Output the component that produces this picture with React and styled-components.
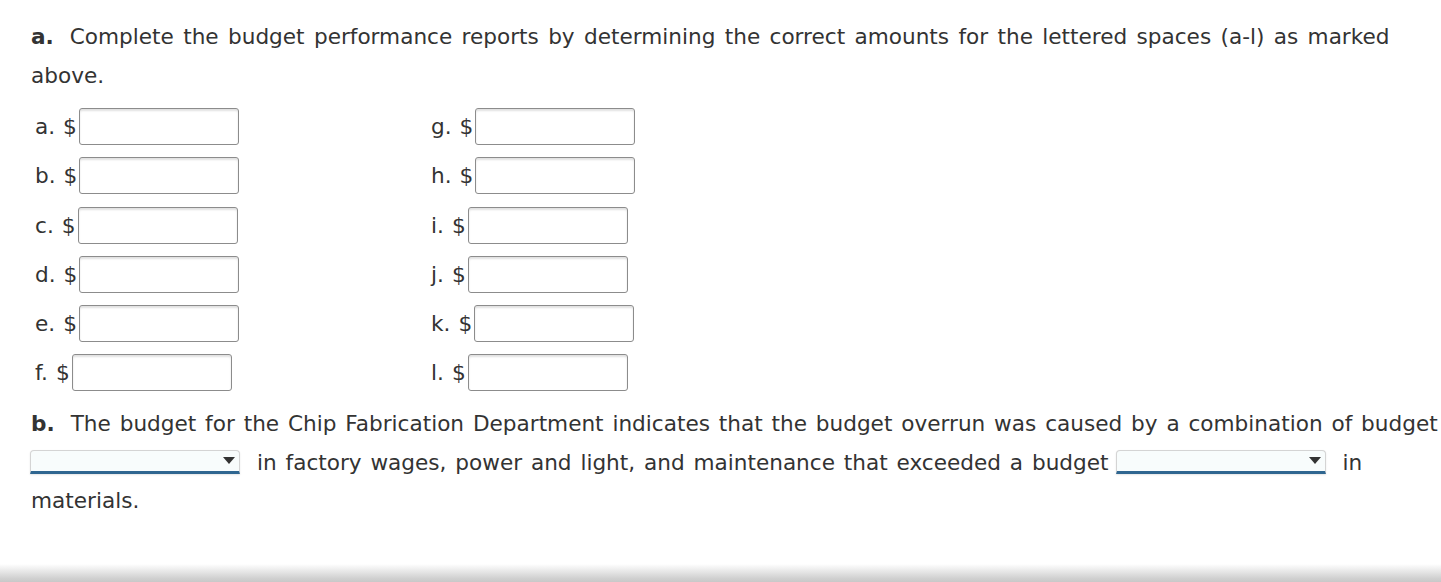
import React from "react";
import styled, { createGlobalStyle } from "styled-components";

const GlobalStyle = createGlobalStyle`
  html, body {
    margin: 0;
    padding: 0;
    background: #fff;
  }
  body {
    font-family: "DejaVu Sans", Verdana, sans-serif;
    color: #333;
  }
`;

const Page = styled.div`
  width: 1441px;
  height: 582px;
  display: flex;
  flex-direction: column;
  overflow: hidden;
`;

const Content = styled.div`
  flex: 1;
  padding: 18px 0 0 31px;
`;

const Para = styled.p`
  margin: 0;
  font-size: 21.6px;
  line-height: 38.6px;
  word-spacing: ${(p) => p.$ws}px;
`;

const Tag = styled.b`
  font-weight: bold;
  margin-right: 16px;
`;

const Grid = styled.div`
  display: grid;
  grid-template-columns: 396px auto;
  grid-auto-flow: column;
  grid-template-rows: repeat(6, 37px);
  row-gap: 12.2px;
  margin: 13px 0 14px 4px;
`;

const Row = styled.label`
  display: flex;
  align-items: center;
  font-size: 21.6px;
  color: #333;
`;

const Letter = styled.span`
  margin-right: 8px;
`;

const Amount = styled.input`
  width: 160px;
  height: 37px;
  box-sizing: border-box;
  border: 1px solid #8c8c8c;
  border-radius: 3px;
  box-shadow: inset 0 2px 2px rgba(0, 0, 0, 0.12);
  background: #fff;
  margin: 0 0 0 2px;
  outline: none;
`;

const SelectBox = styled.span`
  display: inline-block;
  position: relative;
  vertical-align: middle;
  width: ${(p) => p.$w}px;
  height: 24px;
  box-sizing: border-box;
  border: 1px solid #d4d4d4;
  border-bottom: 3px solid #2f6690;
  border-radius: 4px 4px 0 0;
  background: #f8fcfc;
  margin: -4px ${(p) => p.$mr}px 0 ${(p) => p.$ml}px;
  box-shadow: 0 1px 2px rgba(0, 0, 0, 0.1);
`;

const Caret = styled.span`
  position: absolute;
  right: 4px;
  top: 6px;
  width: 0;
  height: 0;
  border-left: 6px solid transparent;
  border-right: 6px solid transparent;
  border-top: 7px solid #333;
`;

const Shade = styled.div`
  height: 18px;
  background: linear-gradient(to bottom, rgba(255, 255, 255, 0), #d0d0d0 80%, #c8c8c8);
`;

const Dropdown = ({ w, ml, mr }) => (
  <SelectBox $w={w} $ml={ml} $mr={mr}>
    <Caret />
  </SelectBox>
);

const letters = ["a", "b", "c", "d", "e", "f", "g", "h", "i", "j", "k", "l"];

export default function App() {
  return (
    <Page>
      <GlobalStyle />
      <Content>
        <Para $ws={2.5}>
          <Tag>a.</Tag>Complete the budget performance reports by determining
          the correct amounts for the lettered spaces (a-l) as marked above.
        </Para>
        <Grid>
          {letters.map((l) => (
            <Row key={l}>
              <Letter>{l}.</Letter>$
              <Amount type="text" />
            </Row>
          ))}
        </Grid>
        <Para $ws={2}>
          <Tag>b.</Tag>The budget for the Chip Fabrication Department indicates
          that the budget overrun was caused by a combination of budget{" "}
          <Dropdown w={210} ml={-1} mr={17} />
          in factory wages, power and light, and maintenance that exceeded a
          budget
          <Dropdown w={210} ml={7} mr={17} />
          in materials.
        </Para>
      </Content>
      <Shade />
    </Page>
  );
}
